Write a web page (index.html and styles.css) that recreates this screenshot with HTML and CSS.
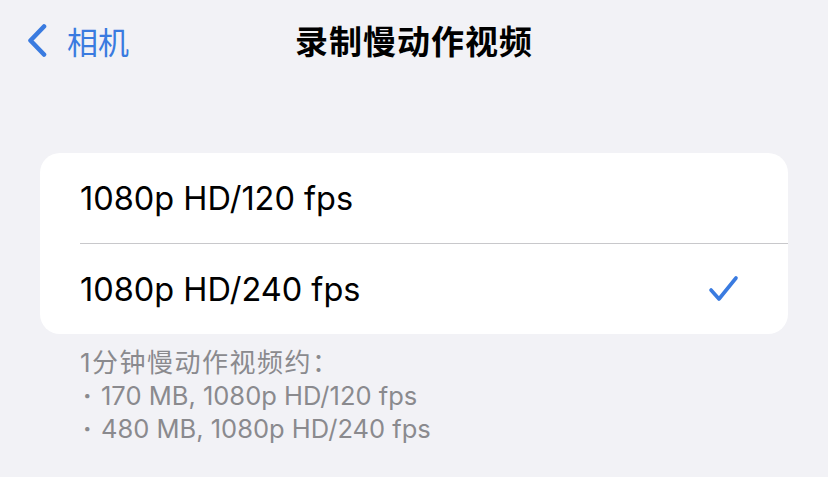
FILE: index.html
```html
<!DOCTYPE html>
<html>
	<head>
		<title>录制慢动作视频</title>
		<meta name="viewport" content="width=device-width, initial-scale=1">
		<link rel="stylesheet" href="styles.css">
	</head>
	<body>
		<header class="nav">
			<a class="back" href="#">
				<svg class="chev" width="22" height="34" viewBox="0 0 22 34">
					<path d="M18 3.5 L4.5 17.5 L18 31.5" fill="none" stroke="#3a7be0" stroke-width="4.6" stroke-linecap="round" stroke-linejoin="round"/>
				</svg>
				<span>相机</span>
			</a>
			<h1 class="title">录制慢动作视频</h1>
			<span></span>
		</header>
		<main>
			<ul class="list">
				<li class="row"><span>1080p HD/120 fps</span></li>
				<li class="row"><span>1080p HD/240 fps</span>
					<svg class="check" width="32" height="30" viewBox="0 0 32 30">
						<path d="M3 16 L11 25 L28 4" fill="none" stroke="#3a7be0" stroke-width="3.6" stroke-linecap="round" stroke-linejoin="round"/>
					</svg>
				</li>
			</ul>
			<p class="note">
				<span class="lead">1分钟慢动作视频约：</span><br>
				<span class="dot">·</span>170 MB, 1080p HD/120 fps<br>
				<span class="dot">·</span>480 MB, 1080p HD/240 fps
			</p>
		</main>
	</body>
</html>
```

FILE: styles.css
```css
html, body {
	margin: 0;
	padding: 0;
	height: 100%;
	background: #f2f2f6;
	font-family: Inter, "Noto Sans CJK SC", sans-serif;
	color: #000;
	overflow: hidden;
}
.nav {
	display: grid;
	grid-template-columns: 1fr auto 1fr;
	align-items: center;
	height: 80px;
}
.back {
	display: flex;
	align-items: center;
	gap: 19px;
	padding-left: 26px;
	color: #3a7be0;
	text-decoration: none;
	font-size: 31px;
}
.title {
	margin: 0;
	font-size: 33px;
	font-weight: bold;
	letter-spacing: 1px;
}
.list {
	list-style: none;
	margin: 73px 40px 0;
	padding: 0;
	background: #fff;
	border-radius: 20px;
}
.row {
	display: flex;
	align-items: center;
	justify-content: space-between;
	height: 90px;
	margin-left: 40px;
	padding-right: 48px;
	font-size: 32.5px;
}
.row + .row {
	border-top: 1px solid #c8c8cb;
}
.note {
	margin: 12px 0 0 80px;
	font-size: 25.5px;
	line-height: 33px;
	color: #8a8a8e;
}
.lead {
	font-size: 26px;
	letter-spacing: 1.5px;
}
.dot {
	display: inline-block;
	box-sizing: border-box;
	width: 21px;
	padding-left: 3px;
	font-weight: bold;
}
```
